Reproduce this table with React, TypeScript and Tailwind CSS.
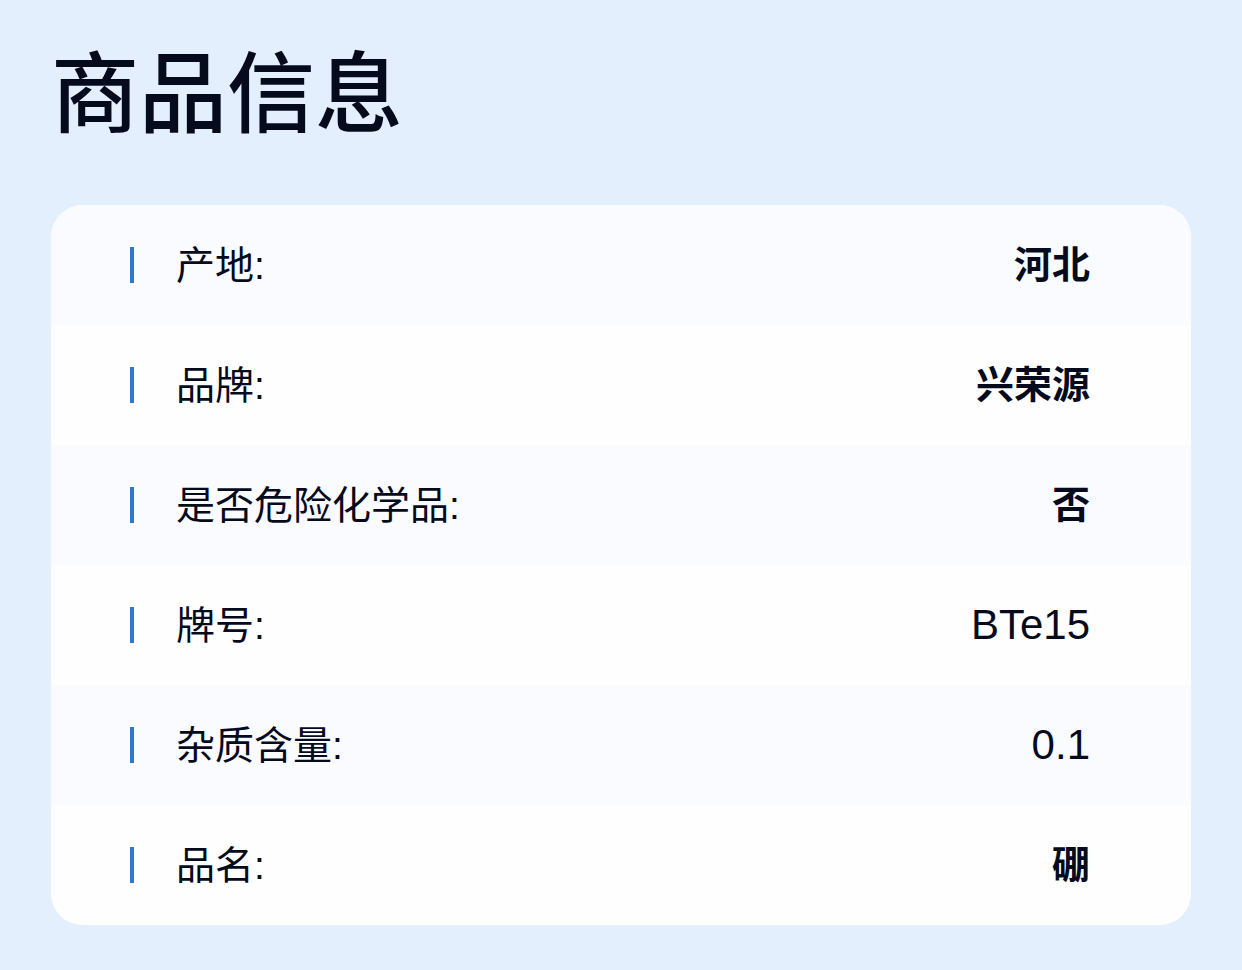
const rows = [
  { label: '产地:', value: '河北' },
  { label: '品牌:', value: '兴荣源' },
  { label: '是否危险化学品:', value: '否' },
  { label: '牌号:', value: 'BTe15' },
  { label: '杂质含量:', value: '0.1' },
  { label: '品名:', value: '硼' },
];

export default function App() {
  return (
    <div
      className="min-h-[970px] bg-[#e3effd] px-[51px] pt-[40px] pb-[45px] text-[#050a1c]"
      style={{ fontFamily: '"Liberation Sans", "Noto Sans CJK SC", sans-serif' }}
    >
      {/* Title */}
      <h1 className="text-[88px] leading-[110px] font-medium">商品信息</h1>

      {/* Info card */}
      <div className="mt-[55px] w-[1140px] rounded-[32px] overflow-hidden bg-white">
        {rows.map((row, i) => {
          const latin = /^[a-zA-Z0-9.]+$/.test(row.value);
          return (
            <div
              key={row.label}
              className={`h-[120px] flex items-center justify-between pl-[79px] pr-[101px] ${
                i % 2 === 0 ? 'bg-[#f9fbff]' : 'bg-[#fefefe]'
              }`}
            >
              <div className="flex items-center">
                <span className="w-[4px] h-[36px] bg-[#2f77d1]" />
                <span className="ml-[42px] text-[39px] leading-none">{row.label}</span>
              </div>
              <span
                className={
                  latin ? 'text-[42px] leading-none font-normal' : 'text-[38px] leading-none font-bold'
                }
              >
                {row.value}
              </span>
            </div>
          );
        })}
      </div>
    </div>
  );
}
